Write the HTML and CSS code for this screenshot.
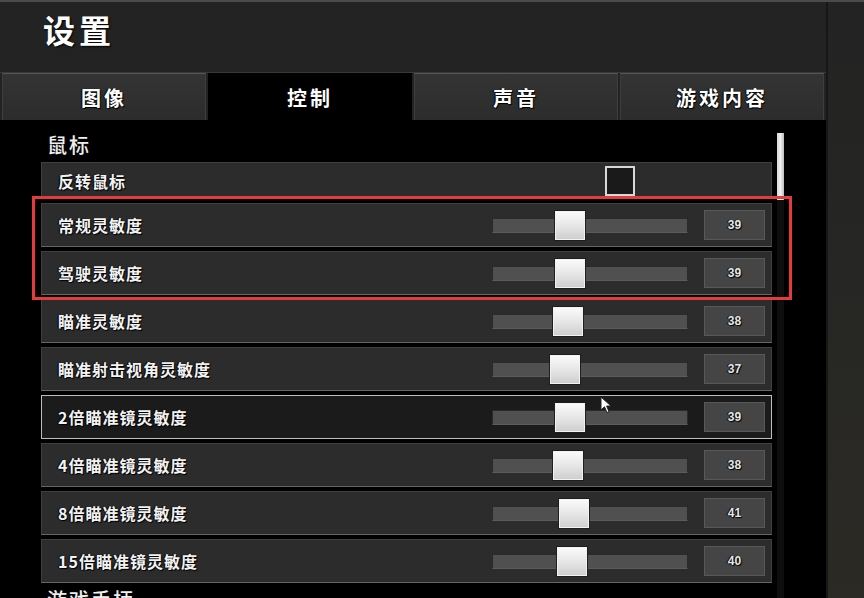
FILE: index.html
```html
<!DOCTYPE html>
<html lang="zh-CN">
<head>
  <meta charset="UTF-8">
  <title>设置</title>
  <link rel="stylesheet" href="styles.css">
</head>
<body>
  <div class="screen">
    <div class="window">
      <div class="header">
        <h1 class="header__title">设置</h1>
      </div>
      <div class="tabs">
        <div class="tab">图像</div>
        <div class="tab tab--active">控制</div>
        <div class="tab">声音</div>
        <div class="tab">游戏内容</div>
      </div>
      <div class="content">
        <div class="list">
          <div class="section">鼠标</div>
          <div class="row row--short">
            <span class="row__label">反转鼠标</span>
            <span class="checkbox"></span>
          </div>
          <div class="highlight">
            <div class="row">
              <span class="row__label">常规灵敏度</span>
              <div class="slider"><span class="slider__thumb" style="left:62px"></span></div>
              <span class="value">39</span>
            </div>
            <div class="row">
              <span class="row__label">驾驶灵敏度</span>
              <div class="slider"><span class="slider__thumb" style="left:62px"></span></div>
              <span class="value">39</span>
            </div>
          </div>
          <div class="row">
            <span class="row__label">瞄准灵敏度</span>
            <div class="slider"><span class="slider__thumb" style="left:60px"></span></div>
            <span class="value">38</span>
          </div>
          <div class="row">
            <span class="row__label">瞄准射击视角灵敏度</span>
            <div class="slider"><span class="slider__thumb" style="left:57px"></span></div>
            <span class="value">37</span>
          </div>
          <div class="row row--focus">
            <span class="row__label">2倍瞄准镜灵敏度</span>
            <div class="slider"><span class="slider__thumb" style="left:62px"></span></div>
            <span class="value">39</span>
          </div>
          <div class="row">
            <span class="row__label">4倍瞄准镜灵敏度</span>
            <div class="slider"><span class="slider__thumb" style="left:60px"></span></div>
            <span class="value">38</span>
          </div>
          <div class="row">
            <span class="row__label">8倍瞄准镜灵敏度</span>
            <div class="slider"><span class="slider__thumb" style="left:66px"></span></div>
            <span class="value">41</span>
          </div>
          <div class="row">
            <span class="row__label">15倍瞄准镜灵敏度</span>
            <div class="slider"><span class="slider__thumb" style="left:64px"></span></div>
            <span class="value">40</span>
          </div>
          <div class="section">游戏手柄</div>
        </div>
        <div class="scroll"><div class="scroll__thumb"></div></div>
        <svg class="cursor" width="12" height="18" viewBox="0 0 12 18">
          <path d="M1 1 L1 14 L4.5 10.8 L7 16.5 L9 15.6 L6.6 10 L11 10 Z" fill="#fff" stroke="#222" stroke-width="1"/>
        </svg>
      </div>
    </div>
    <div class="side"></div>
  </div>
</body>
</html>
```

FILE: styles.css
```css
html {
  box-sizing: border-box;
  background: #000;
}

*, *:before, *:after {
  box-sizing: inherit;
}

body {
  margin: 0;
  font-family: "Noto Sans CJK SC", "Noto Sans", sans-serif;
  color: #fff;
}

.screen {
  display: flex;
  height: 598px;
  border-top: 2px solid #4b4b4d;
  overflow: hidden;
}

.window {
  width: 826px;
  display: flex;
  flex-direction: column;
}

.side {
  flex: 1;
  border-left: 2px solid #171717;
  background: linear-gradient(180deg, #232323 0%, #262624 45%, #2b2a25 100%);
}

.header {
  flex-shrink: 0;
  height: 71px;
  background: #232323;
  border-bottom: 1px solid #393939;
  padding: 7px 0 0 43px;
}

.header__title {
  margin: 0;
  font-size: 32px;
  line-height: 40px;
  font-weight: 700;
  letter-spacing: 4px;
  text-shadow: 1px 1px 2px #000;
}

.tabs {
  flex-shrink: 0;
  display: flex;
  gap: 2px;
  height: 47px;
  padding: 0 2px;
  background: #232323;
}

.tab {
  flex: 1;
  display: flex;
  align-items: center;
  justify-content: center;
  background: linear-gradient(180deg, #343434 0%, #2c2c2c 100%);
  border: 1px solid #3e3e3e;
  border-top-color: #555;
  border-bottom: 0;
  font-size: 20px;
  font-weight: 700;
  letter-spacing: 3px;
  text-shadow: 1px 1px 1px #000, -1px 0 1px #000;
}

.tab--active {
  background: #000;
  border-color: #000;
}

.content {
  flex: 1;
  min-height: 0;
  overflow: hidden;
  position: relative;
  display: flex;
  align-items: flex-start;
  background: #000;
  padding: 12px 0 0 41px;
}

.list {
  width: 731px;
  flex-shrink: 0;
}

.section {
  font-size: 20px;
  line-height: 26px;
  font-weight: 500;
  letter-spacing: 2px;
  color: #eee;
  margin: 0 0 4px 6px;
}

.row {
  display: flex;
  align-items: center;
  height: 44px;
  margin-bottom: 4px;
  padding: 0 6px 0 16px;
  background: #2c2c2c;
  border: 1px solid #404040;
  border-bottom-color: #666;
}

.row--short {
  height: 37px;
}

.row--focus {
  background: #1b1b1b;
  border-color: #bdbdbd;
}

.row__label {
  flex: 1;
  font-size: 16px;
  font-weight: 700;
  letter-spacing: 1px;
  color: #f2f2f2;
  text-shadow: 1px 1px 1px #000, -1px 0 1px #000;
}

.checkbox {
  width: 30px;
  height: 30px;
  margin-right: 130px;
  background: #1a1a1a;
  border: 2px solid #d8d8d8;
}

.slider {
  position: relative;
  width: 196px;
  height: 15px;
  margin-right: 16px;
  background: #505050;
  border: 1px solid #2a2a2a;
  border-bottom-color: #5c5c5c;
}

.slider__thumb {
  position: absolute;
  top: -8px;
  width: 30px;
  height: 29px;
  background: linear-gradient(180deg, #fafafa 0%, #e4e4e4 55%, #cfcfcf 100%);
  border: 1px solid #f2f2f2;
  box-shadow: 0 0 0 1px #1e1e1e;
}

.value {
  width: 61px;
  height: 30px;
  display: flex;
  align-items: center;
  justify-content: center;
  background: #454545;
  border: 1px solid #585858;
  font-family: "Liberation Sans", sans-serif;
  font-size: 12px;
  font-weight: 700;
  color: #e6e6e6;
  text-shadow: 1px 1px 1px #000, -1px 0 1px #000;
}

.highlight {
  position: relative;
}

.highlight:after {
  content: "";
  position: absolute;
  top: -7px;
  left: -9px;
  right: -20px;
  bottom: -5px;
  border: 3px solid #e63b3d;
}

.scroll {
  width: 7px;
  height: 100%;
  margin: 1px 0 0 5px;
  background: #0e0e0e;
}

.scroll__thumb {
  height: 67px;
  background: linear-gradient(90deg, #d8d8d8, #f0f0f0, #bcbcbc);
}

.cursor {
  position: absolute;
  left: 600px;
  top: 276px;
}
```
